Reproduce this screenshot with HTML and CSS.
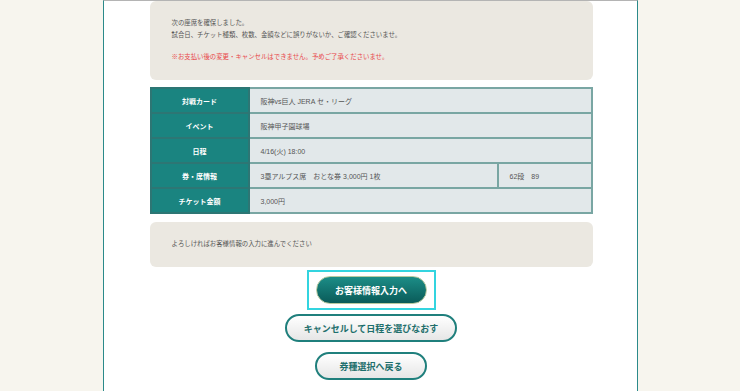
FILE: index.html
```html
<!DOCTYPE html>
<html lang="ja">
<head>
<meta charset="utf-8">
<title>座席確認</title>
<link rel="stylesheet" href="styles.css">
</head>
<body>

<div class="page">
  <div class="inner">

    <div class="notice">
      <p>次の座席を確保しました。<br>試合日、チケット種類、枚数、金額などに誤りがないか、ご確認くださいませ。</p>
      <p class="warn">※お支払い後の変更・キャンセルはできません。予めご了承くださいませ。</p>
    </div>

    <table class="detail">
      <tr>
        <th>対戦カード</th>
        <td colspan="2">阪神vs巨人 JERA セ・リーグ</td>
      </tr>
      <tr>
        <th>イベント</th>
        <td colspan="2">阪神甲子園球場</td>
      </tr>
      <tr>
        <th>日程</th>
        <td colspan="2">4/16(火) 18:00</td>
      </tr>
      <tr>
        <th>券・席情報</th>
        <td>3塁アルプス席　おとな券 3,000円 1枚</td>
        <td class="seat">62段　89</td>
      </tr>
      <tr>
        <th>チケット金額</th>
        <td colspan="2">3,000円</td>
      </tr>
    </table>

    <div class="notice next">
      <p>よろしければお客様情報の入力に進んでください</p>
    </div>

    <div class="actions">
      <span class="focus"><a class="btn primary" href="#">お客様情報入力へ</a></span>
      <a class="btn wide" href="#">キャンセルして日程を選びなおす</a>
      <a class="btn" href="#">券種選択へ戻る</a>
    </div>

  </div>
</div>

</body>
</html>
```

FILE: styles.css
```css
body {
  margin: 0;
  background-color: #f7f5ee;
  font-family: "Liberation Sans", "Noto Sans CJK JP", sans-serif;
  color: #555555;
}

.page {
  width: 535px;
  margin-left: 103px;
  min-height: 391px;
  box-sizing: border-box;
  background-color: #ffffff;
  border-left: 1px solid #2b8a8a;
  border-right: 1px solid #2b8a8a;
  border-top: 1px solid #b4b4b4;
}

.inner {
  width: 443px;
  margin: 0 auto;
  padding-left: 1px;
}

.notice {
  background-color: #ebe8e1;
  border-radius: 6px;
  padding: 16px 22px 17px;
  font-size: 6.4px;
  line-height: 12px;
}
.notice p { margin: 0; }
.notice p.warn { margin-top: 10px; color: #e8474a; }

.notice.next {
  margin-top: 8px;
  padding: 16px 22px 17px;
}

.detail {
  width: 100%;
  margin-top: 7px;
  border-collapse: collapse;
  border: 2px solid #3f8583;
  font-size: 7px;
}
.detail th,
.detail td {
  height: 23px;
  padding: 0 11px;
  border: 2px solid #79a6a3;
}
.detail th {
  width: 74px;
  background-color: #1a8480;
  border-color: #2d7674;
  color: #ffffff;
  font-weight: bold;
  text-align: center;
}
.detail td {
  background-color: #e2e8ea;
  color: #555555;
  text-align: left;
}
.detail td.seat { width: 70px; }

.actions {
  display: flex;
  flex-direction: column;
  align-items: center;
  gap: 10px;
  margin-top: 3px;
}

.focus {
  margin-bottom: -6px;
  padding: 4px 7px;
  border: 2px solid #33d4df;
}

.btn {
  display: flex;
  align-items: center;
  justify-content: center;
  box-sizing: border-box;
  width: 112px;
  height: 28px;
  border: 2px solid #1f7f7c;
  border-radius: 14px;
  background: linear-gradient(#ffffff, #e6e6e6);
  color: #1e6f6c;
  font-size: 9px;
  font-weight: bold;
  text-decoration: none;
}
.btn.wide { width: 172px; }
.btn.primary {
  width: 111px;
  border: 1px solid #b7c9a0;
  background: linear-gradient(#1c8d87, #0a5b59);
  color: #ffffff;
}
```
